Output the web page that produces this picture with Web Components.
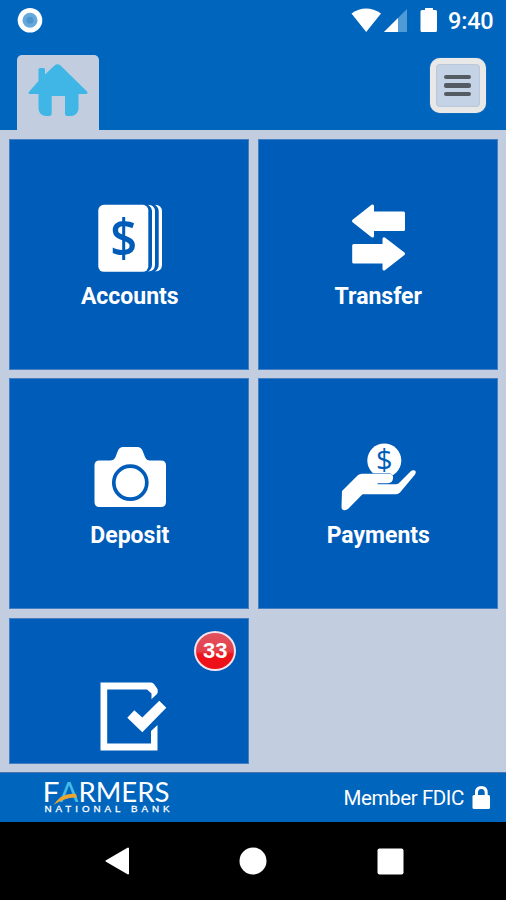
<!DOCTYPE html>
<html lang="en">
<head>
<meta charset="UTF-8">
<title>Farmers National Bank</title>
<style>
    body {
        margin: 0;
        font-family: Roboto, "Liberation Sans", sans-serif;
        color: white;
        background-color: black;
    }
</style>
</head>
<body>
<bank-app>
    <status-bar slot="top" time="9:40"></status-bar>
    <tab-header slot="top"></tab-header>
    <menu-tile icon="accounts">Accounts</menu-tile>
    <menu-tile icon="transfer">Transfer</menu-tile>
    <menu-tile icon="deposit">Deposit</menu-tile>
    <menu-tile icon="payments">Payments</menu-tile>
    <menu-tile icon="approvals" badge="33"></menu-tile>
    <bank-footer slot="bottom">Member FDIC</bank-footer>
    <nav-bar slot="bottom"></nav-bar>
</bank-app>

<script>
const icons = {
    accounts: `
        <svg viewBox="89 202.500 80 72">
            <rect x="98.3" y="204.3" width="50" height="67" rx="5.5" fill="white"/>
            <path d="M148 204.3Q154.800 204.500 155 211V264.500Q154.800 270.500 148 271Q152 268.500 152 264V211Q152 207 148 204.300ZM155 204.300Q161.800 204.500 162 211V264.500Q161.800 270.500 155 271Q158.700 268.500 158.700 264V211Q158.700 207 155 204.300Z" fill="white"/>
            <text x="123.700" y="256" text-anchor="middle" font-family="Open Sans" font-weight="600" font-size="52" textLength="27" lengthAdjust="spacingAndGlyphs" fill="#005cb9">$</text>
        </svg>`,
    transfer: `
        <svg viewBox="338 203 80 72" fill="white" stroke="white" stroke-width="3" stroke-linejoin="round">
            <path d="M353.500 221L372.500 206V213H403.500V229.500H372.500V236Z"/>
            <path d="M403.500 253.700L384 238.800V245.500H353.700V262H384V269Z"/>
        </svg>`,
    deposit: `
        <svg viewBox="89 442 80 72">
            <path d="M99.500 460.500H110Q114 460.500 115.500 457L118 450.500Q119.500 447 123 447H137.500Q141 447 142.500 450.500L145 457Q146.500 460.500 150 460.500H161Q166 460.500 166 465.500V502Q166 507 161 507H99.500Q94.500 507 94.500 502V465.500Q94.500 460.500 99.500 460.500Z" fill="white"/>
            <circle cx="130.300" cy="482.700" r="16.500" fill="none" stroke="#005cb9" stroke-width="3.700"/>
        </svg>`,
    payments: `
        <svg viewBox="338 442 80 72">
            <circle cx="384.300" cy="460.500" r="17" fill="white"/>
            <text x="384.300" y="469.800" text-anchor="middle" font-family="Open Sans" font-size="29" fill="#005cb9">$</text>
            <path d="M342 491L357.500 475.500Q359.500 473.800 362 473.800H390Q393.500 474.500 393 478.500Q392.500 483 388 483.200H377.500V484.300H396Q398 484.300 400 482L410.500 471.500Q412.500 469.500 415 470.500Q416.500 472 415 474.500L400 492.500Q398.500 494.300 396 494.300H362.500L348.500 508.500Q346.500 510.500 344 510.200Q341.500 510 341.500 507Z" fill="white" stroke="#005cb9" stroke-width="1" paint-order="stroke"/>
        </svg>`,
    approvals: `
        <svg viewBox="89 682 80 72" fill="white">
            <path d="M100.500 682.500H151Q153 682.700 154 684L157.500 689Q158.300 691.500 157 694L151.500 699.300V693.500L147 689.500H107.200V743.500H151V731L157.500 725V750.500H100.500Z"/>
            <path d="M127.300 717.800L134.300 710.300L142.300 717.500L159.300 700.700L166.300 707.800L142.300 732.300Z"/>
        </svg>`
};

class BankApp extends HTMLElement {
    constructor() {
        super();

        this.attachShadow({ mode: "open" });
        this.shadowRoot.innerHTML = `
            <style>
                :host {
                    display: flex;
                    flex-direction: column;
                    height: 900px;
                    overflow: hidden;
                }

                .grid {
                    flex: 1;
                    min-height: 0;
                    overflow: hidden;
                    box-sizing: border-box;
                    display: grid;
                    grid-template-columns: 240px 240px;
                    grid-template-rows: 231px 231px 146px;
                    column-gap: 8.500px;
                    row-gap: 8.500px;
                    padding: 8.500px 0 0 9.300px;
                    background-color: #c2cee0;
                }
            </style>
            <slot name="top"></slot>
            <div class="grid"><slot></slot></div>
            <slot name="bottom"></slot>
        `;
    }
}

class StatusBar extends HTMLElement {
    constructor() {
        super();

        this.attachShadow({ mode: "open" });
        this.shadowRoot.innerHTML = `
            <style>
                :host {
                    display: flex;
                    align-items: center;
                    box-sizing: border-box;
                    height: 41px;
                    padding: 0 12px 0 17px;
                    background-color: #0065bd;
                }

                .signals {
                    margin-left: auto;
                }

                svg {
                    display: block;
                }

                .time {
                    width: 46px;
                    margin-left: 10px;
                    font-size: 23.500px;
                    font-weight: 500;
                    letter-spacing: -.2px;
                    white-space: nowrap;
                }
            </style>
            <svg width="26" height="41" viewBox="17 0 26 41">
                <circle cx="30" cy="20.300" r="12.300" fill="white"/>
                <circle cx="30" cy="20.300" r="7.500" fill="#65a9dc"/>
                <circle cx="30" cy="20.300" r="3.500" fill="#4a95d0"/>
            </svg>
            <svg class="signals" width="87" height="41" viewBox="351 0 87 41">
                <path d="M351.500 13.500Q366 3.500 381 13.500L366.200 32Z" fill="white"/>
                <path d="M384 32L407 9V32Z" fill="#4f9bd6"/>
                <path d="M384 32L398 18V32Z" fill="white"/>
                <path d="M422 10H425V8H433V10H435.500Q437 10 437 11.500V30.500Q437 32 435.500 32H422Q420.500 32 420.500 30.500V11.500Q420.500 10 422 10Z" fill="white"/>
            </svg>
            <span class="time">${this.getAttribute("time")}</span>
        `;
    }
}

class TabHeader extends HTMLElement {
    constructor() {
        super();

        this.attachShadow({ mode: "open" });
        this.shadowRoot.innerHTML = `
            <style>
                :host {
                    display: flex;
                    justify-content: space-between;
                    box-sizing: border-box;
                    height: 89px;
                    padding: 14px 20.500px 0 16.500px;
                    background-color: #0065bd;
                }

                .tab {
                    width: 82.500px;
                    height: 75px;
                    border-radius: 5px 5px 0 0;
                    background-color: #c2cee0;
                }

                .menu {
                    display: flex;
                    flex-direction: column;
                    align-items: center;
                    justify-content: center;
                    gap: 4px;
                    box-sizing: border-box;
                    width: 55.500px;
                    height: 55px;
                    margin-top: 3px;
                    border: 6px solid #e8e8e8;
                    border-radius: 10px;
                    background-color: #c5d3e6;
                    box-shadow: inset 0 0 2px #a4acb8, 0 0 1px #a5b3c5;
                }

                .menu i {
                    width: 27px;
                    height: 4.500px;
                    border-radius: 2px;
                    background-color: #555b63;
                }

                svg {
                    display: block;
                }
            </style>
            <div class="tab">
                <svg width="82" height="75" viewBox="17 55 82 75">
                    <path d="M28.800 92L38.500 81V69.500Q38.500 68 40 68H43.500Q45 68 45 69.500V74.500L54.500 65.500Q57.500 63 60.500 65.500L87.500 92Q88 94 86 94H78.500V109Q77.500 115.500 71 116H67Q65 116 65 113.500V96H51.700V113.500Q51.700 116 49.500 116H46Q39.500 115.500 38.500 109V94H30Q28 94 28.800 92Z" fill="#3fb6e6"/>
                </svg>
            </div>
            <div class="menu"><i></i><i></i><i></i></div>
        `;
    }
}

class MenuTile extends HTMLElement {
    constructor() {
        super();

        const badge = this.getAttribute("badge");

        this.attachShadow({ mode: "open" });
        this.shadowRoot.innerHTML = `
            <style>
                :host {
                    display: flex;
                    flex-direction: column;
                    align-items: center;
                    position: relative;
                    box-sizing: border-box;
                    padding-top: 63px;
                    border: 1px solid #457fc3;
                    background-color: #005cb9;
                }

                svg {
                    flex: none;
                    display: block;
                    width: 80px;
                    height: 72px;
                }

                .label {
                    margin-top: 10px;
                    padding-left: 1px;
                    font-size: 23px;
                    font-weight: 700;
                    line-height: 24px;
                }

                .badge {
                    position: absolute;
                    top: 12px;
                    right: 12px;
                    box-sizing: border-box;
                    width: 42px;
                    height: 40px;
                    border: 2px solid #f3e3ee;
                    border-radius: 50%;
                    background: linear-gradient(#e0525f, #e4404b 50%, #ec1119 60%, #ee1018);
                    font-family: "Liberation Sans", sans-serif;
                    font-size: 22px;
                    font-weight: 700;
                    line-height: 36px;
                    text-align: center;
                }
            </style>
            ${icons[this.getAttribute("icon")]}
            <div class="label"><slot></slot></div>
            ${badge ? `<div class="badge">${badge}</div>` : ""}
        `;
    }
}

class BankFooter extends HTMLElement {
    constructor() {
        super();

        this.attachShadow({ mode: "open" });
        this.shadowRoot.innerHTML = `
            <style>
                :host {
                    display: flex;
                    align-items: center;
                    box-sizing: border-box;
                    height: 50px;
                    padding: 0 15px 0 44px;
                    border-top: 1px solid #4c75ad;
                    background-color: #0065bd;
                }

                svg {
                    display: block;
                }

                .member {
                    margin-left: auto;
                    padding-top: 1px;
                    font-size: 20.500px;
                    letter-spacing: -.4px;
                }

                .lock {
                    margin-left: 8px;
                }
            </style>
            <svg width="128" height="49" viewBox="44 773 128 49" font-family="Lato, sans-serif" fill="white">
                <text x="42.500" y="801.700" font-size="27" textLength="17" lengthAdjust="spacingAndGlyphs">F</text>
                <text x="59.500" y="801.700" font-size="27" textLength="19" lengthAdjust="spacingAndGlyphs" fill="#45bce9">A</text>
                <text x="78.500" y="801.700" font-size="27" textLength="91" lengthAdjust="spacingAndGlyphs">RMERS</text>
                <path d="M53.500 805Q62 792 76 794L77 797.500Q66 796.500 53.500 805Z" fill="#f0a52f"/>
                <text x="44.500" y="812" font-family="Liberation Sans" font-size="9.800" stroke="white" stroke-width=".3" textLength="125" lengthAdjust="spacing">NATIONAL BANK</text>
            </svg>
            <span class="member"><slot></slot></span>
            <svg class="lock" width="19" height="49" viewBox="472 773 19 49">
                <path d="M476.500 796V792.500Q476.500 787.500 481.300 787.500T486.200 792.500V796" fill="none" stroke="white" stroke-width="3"/>
                <rect x="472.500" y="795" width="17.500" height="14" rx="1.500" fill="white"/>
            </svg>
        `;
    }
}

class NavBar extends HTMLElement {
    constructor() {
        super();

        this.attachShadow({ mode: "open" });
        this.shadowRoot.innerHTML = `
            <style>
                :host {
                    display: flex;
                    align-items: center;
                    justify-content: space-between;
                    box-sizing: border-box;
                    height: 78px;
                    padding: 0 102.500px 0 104.500px;
                    background-color: black;
                }

                svg {
                    display: block;
                }
            </style>
            <svg width="25" height="28" viewBox="0 0 25 28">
                <path d="M1.500 14L23 1.500V26.500Z" fill="white" stroke="white" stroke-width="2" stroke-linejoin="round"/>
            </svg>
            <svg width="28" height="28" viewBox="0 0 28 28">
                <circle cx="14" cy="14" r="13.500" fill="white"/>
            </svg>
            <svg width="27" height="28" viewBox="0 0 27 28">
                <rect x=".5" y="1.500" width="26" height="26" rx="2" fill="white"/>
            </svg>
        `;
    }
}

customElements.define("status-bar", StatusBar);
customElements.define("tab-header", TabHeader);
customElements.define("menu-tile", MenuTile);
customElements.define("bank-footer", BankFooter);
customElements.define("nav-bar", NavBar);
customElements.define("bank-app", BankApp);
</script>
</body>
</html>
